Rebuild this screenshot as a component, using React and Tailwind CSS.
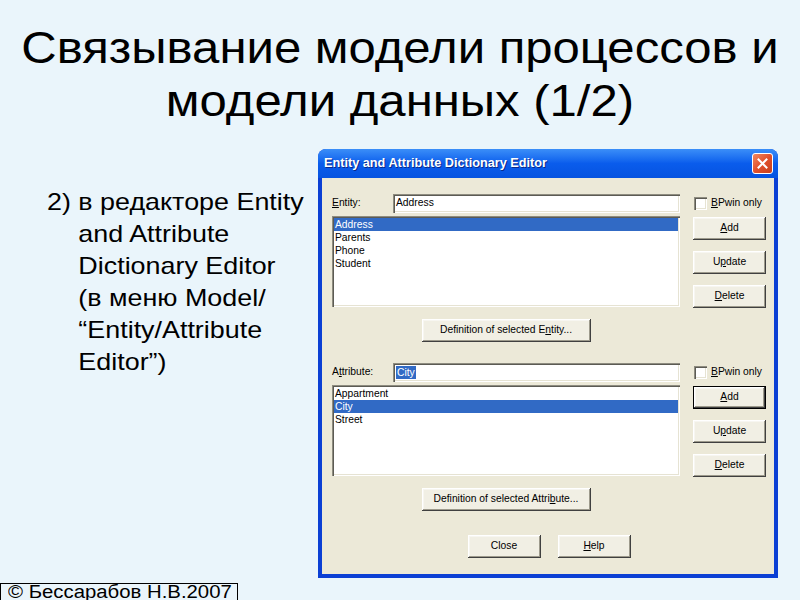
import React from 'react';

const raised =
  'shadow-[inset_-1px_-1px_0_#404040,inset_1px_1px_0_#ffffff,inset_-2px_-2px_0_#9d9a8c,inset_2px_2px_0_#f7f6f1]';
const sunken =
  'shadow-[inset_1px_1px_0_#8e8c80,inset_2px_2px_0_#5c5b54,inset_-1px_-1px_0_#ffffff,inset_-2px_-2px_0_#e6e3d3]';

function Mn({ text, at }) {
  // underline the mnemonic letter
  if (at == null) return <>{text}</>;
  return (
    <>
      {text.slice(0, at)}
      <span className="underline underline-offset-1">{text[at]}</span>
      {text.slice(at + 1)}
    </>
  );
}

function Button({ label, at, w = 'w-[73px]', isDefault = false, className = '' }) {
  return (
    <div
      className={`${w} h-[23px] flex items-center justify-center bg-[#f1efe4] text-black ${
        isDefault ? 'border border-black ' : ''
      }${raised} ${className}`}
    >
      <Mn text={label} at={at} />
    </div>
  );
}

function Section({ label, labelAt, value, selectValue, items, selected, defLabel, defAt, defaultAdd, className = '' }) {
  return (
    <div className={className}>
      <div className="flex gap-[13px]">
        <div className="w-[348px] flex flex-col">
          <div className="flex items-center h-[19px]">
            <span className="w-[61px]">
              <Mn text={label} at={labelAt} />
            </span>
            <div className={`w-[287px] h-[19px] bg-white flex items-center px-[3px] ${sunken}`}>
              {selectValue ? (
                <span className="bg-[#316ac5] text-white px-[1px] leading-[13px]">{value}</span>
              ) : (
                <span>{value}</span>
              )}
            </div>
          </div>
          <div className={`mt-[3px] h-[91px] bg-white p-[2px] ${sunken}`}>
            {items.map((it) => (
              <div
                key={it}
                className={`h-[13px] leading-[13px] px-[1px] ${
                  it === selected ? 'bg-[#316ac5] text-white' : ''
                }`}
              >
                {it}
              </div>
            ))}
          </div>
        </div>
        <div className="w-[73px] flex flex-col">
          <div className="h-[19px] flex items-center gap-[4px] pl-[1px]">
            <div className={`w-[13px] h-[13px] bg-white ${sunken}`} />
            <span>
              <Mn text="BPwin only" at={0} />
            </span>
          </div>
          <Button label="Add" at={0} isDefault={defaultAdd} className="mt-[4px]" />
          <Button label="Update" at={1} className="mt-[11px]" />
          <Button label="Delete" at={0} className="mt-[11px]" />
        </div>
      </div>
      <div className="w-[348px] flex justify-center mt-[11px]">
        <Button label={defLabel} at={defAt} w="w-[169px]" />
      </div>
    </div>
  );
}

function Dialog() {
  return (
    <div className="w-[460px] h-[429px] flex flex-col rounded-t-[8px] bg-[#0b3fd4] overflow-hidden">
      <div className="h-[29px] shrink-0 flex items-center justify-between pl-[6px] pr-[5px] bg-linear-to-b from-[#3b8ef8] via-[#0a5cec] to-[#0653e0]">
        <span className="text-white font-bold text-[12.7px] [text-shadow:1px_1px_0_#0a2a8a]">
          Entity and Attribute Dictionary Editor
        </span>
        <div className="w-[21px] h-[21px] rounded-[3px] border border-white bg-linear-to-br from-[#f0875f] via-[#e0502c] to-[#c7401d] flex items-center justify-center">
          <svg width="11" height="11" viewBox="0 0 11 11">
            <path d="M1.5 1.5 L9.5 9.5 M9.5 1.5 L1.5 9.5" stroke="white" strokeWidth="2" strokeLinecap="square" />
          </svg>
        </div>
      </div>
      <div className="flex-1 mx-[4px] mb-[4px] bg-[#ece9d8] pl-[10px] pt-[16px] text-[10.3px] text-black leading-none">
        <Section
          label="Entity:"
          labelAt={0}
          value="Address"
          items={['Address', 'Parents', 'Phone', 'Student']}
          selected="Address"
          defLabel="Definition of selected Entity..."
          defAt={24}
        />
        <Section
          className="mt-[21px]"
          label="Attribute:"
          labelAt={1}
          value="City"
          selectValue
          items={['Appartment', 'City', 'Street']}
          selected="City"
          defLabel="Definition of selected Attribute..."
          defAt={28}
          defaultAdd
        />
        <div className="w-[434px] flex justify-center gap-[17px] mt-[24px]">
          <Button label="Close" />
          <Button label="Help" at={0} />
        </div>
      </div>
    </div>
  );
}

export default function App() {
  return (
    <div className="w-[800px] h-[600px] overflow-hidden bg-[#eaf5fb] flex flex-col font-['Liberation_Sans',Arial,sans-serif] text-black">
      <h1 className="pt-[21px] text-center text-[44px] leading-[53px] font-normal origin-center scale-x-[1.115]">
        Связывание модели процессов и
        <br />
        модели данных (1/2)
      </h1>
      <div className="mt-[22px] flex">
        <div className="w-[318px] pt-[37px] pl-[47px]">
          <div className="pl-[28px] -indent-[28px] text-[24px] leading-[32px] whitespace-nowrap origin-left scale-x-[1.12]">
            2) в редакторе Entity
            <br />
            and Attribute
            <br />
            Dictionary Editor
            <br />
            (в меню Model/
            <br />
            “Entity/Attribute
            <br />
            Editor”)
          </div>
        </div>
        <Dialog />
      </div>
      <div className="mt-[5px] w-[238px] h-[18px] shrink-0 border border-black pl-[7px] text-[18px] leading-[16px] whitespace-nowrap">
        <span className="inline-block origin-left scale-x-[1.13]">© Бессарабов Н.В.2007</span>
      </div>
    </div>
  );
}
